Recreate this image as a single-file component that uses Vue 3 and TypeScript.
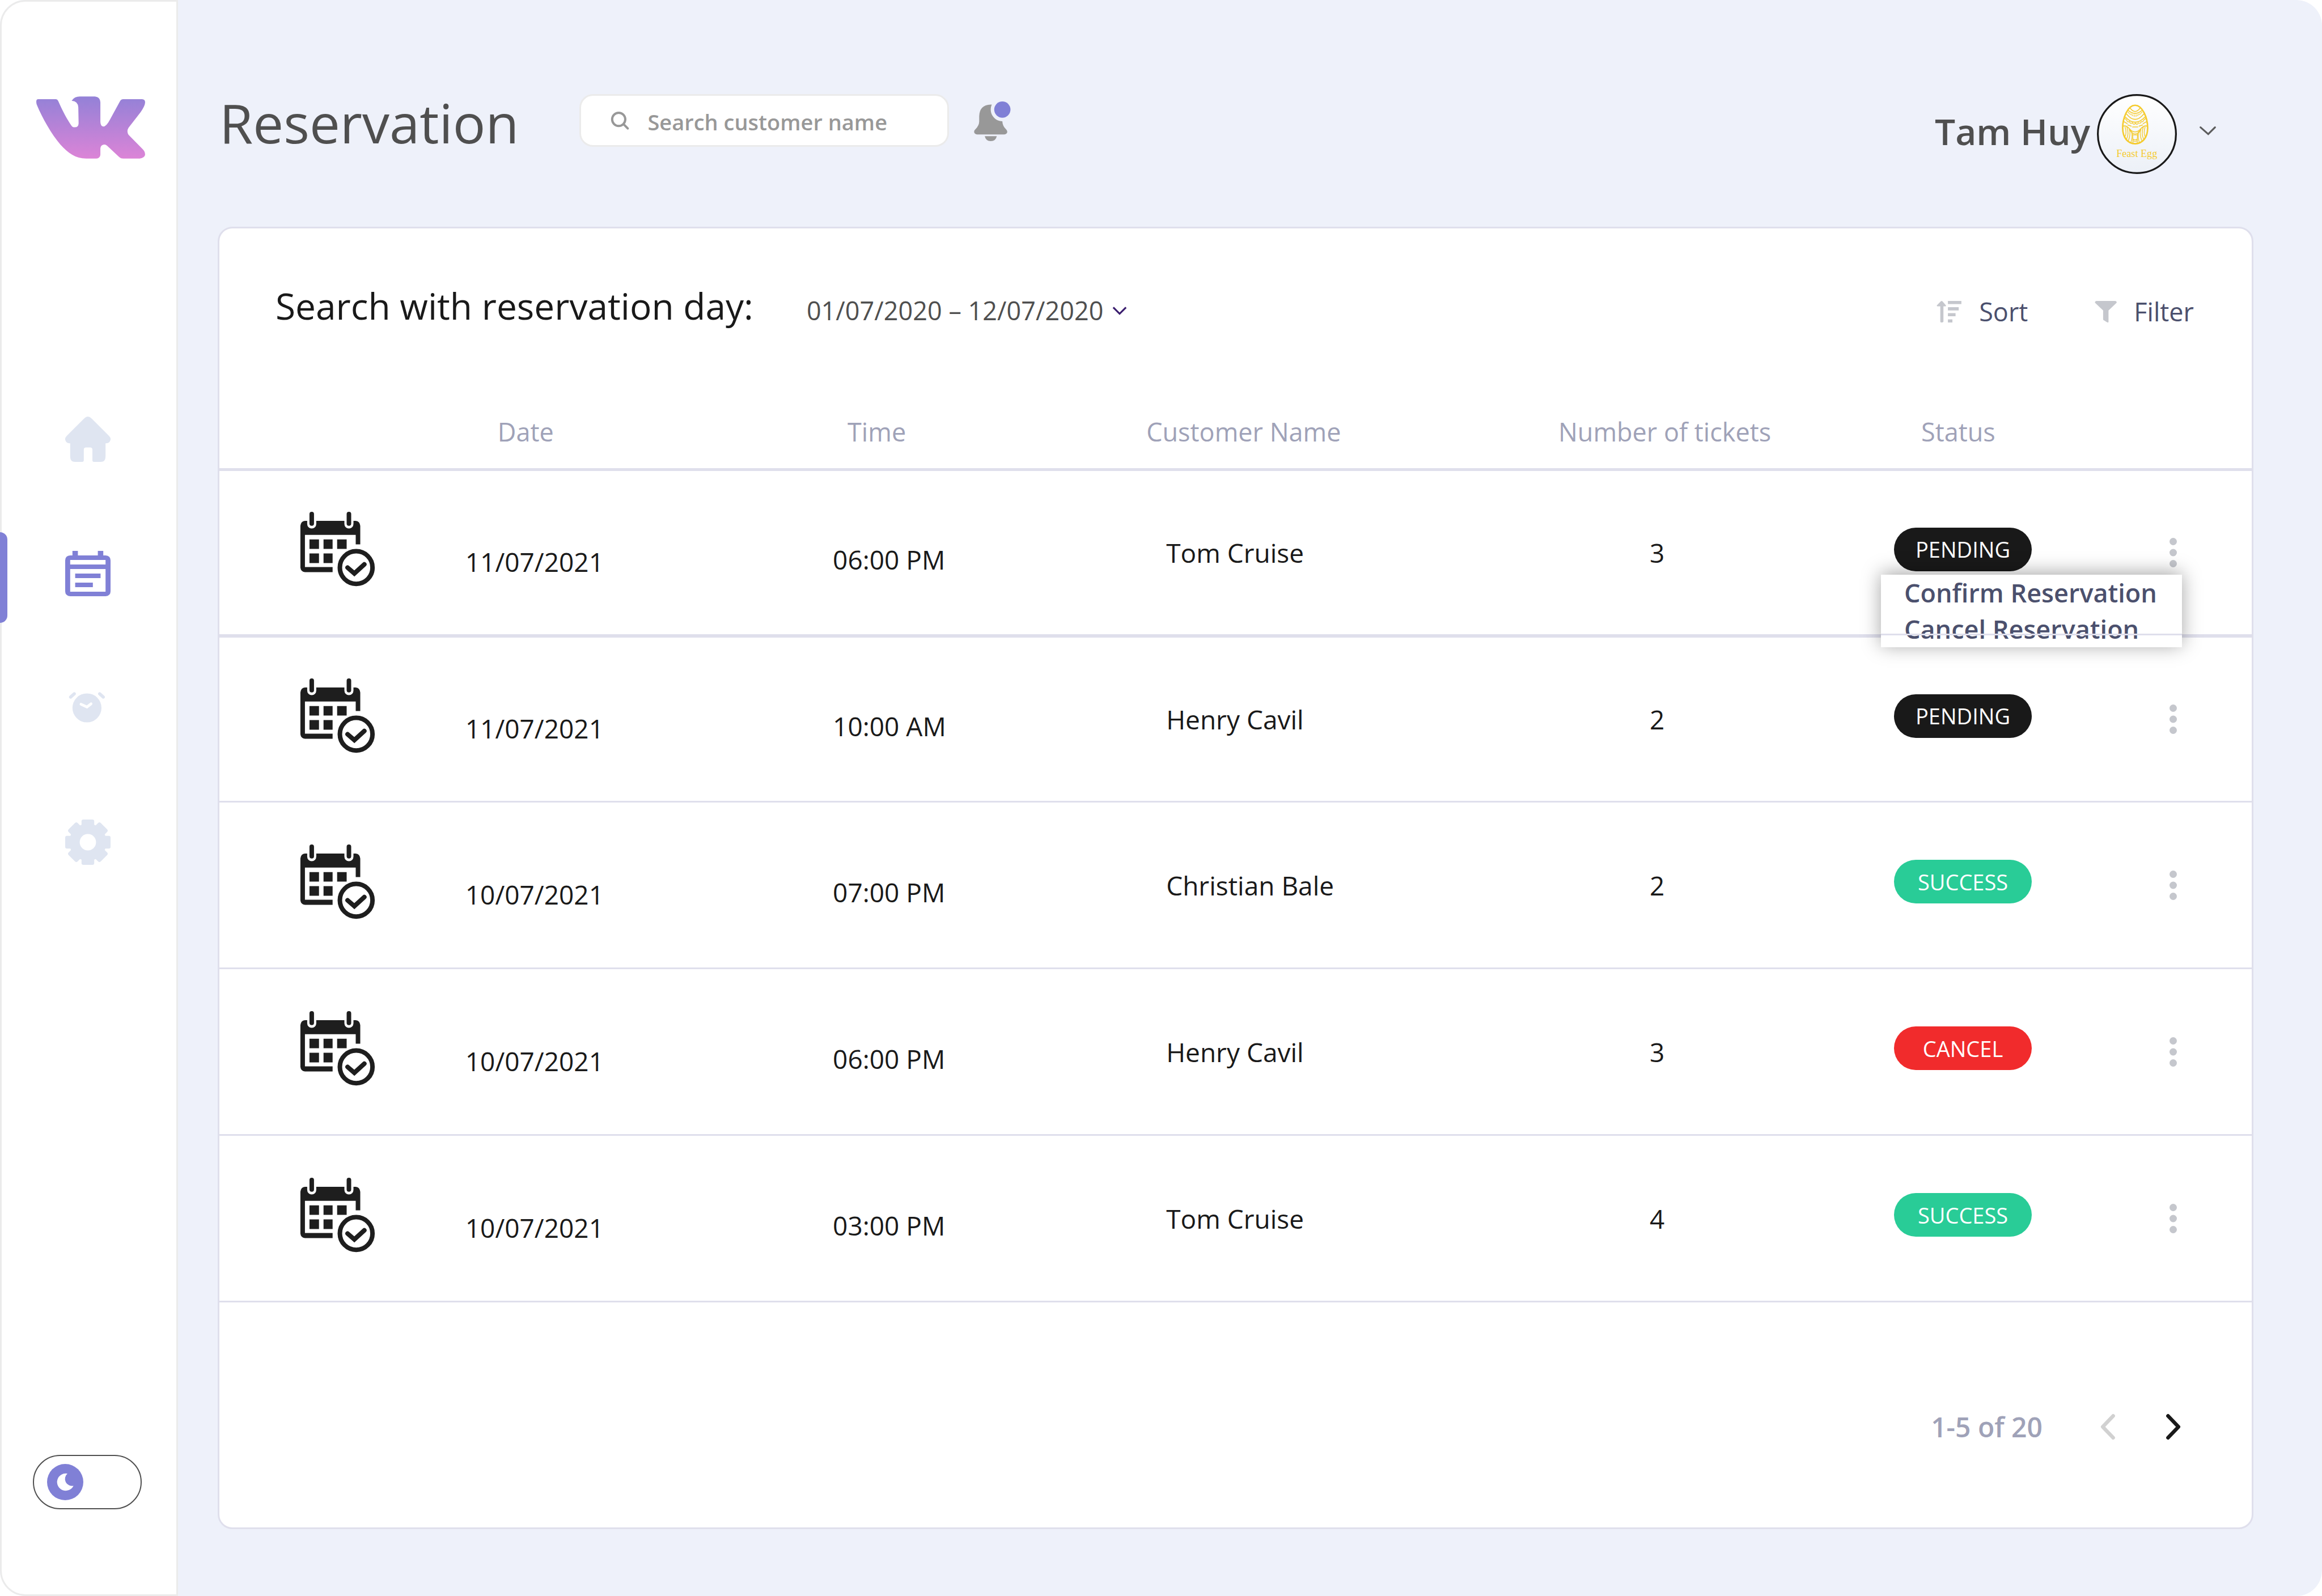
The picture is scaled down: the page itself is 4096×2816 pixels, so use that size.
<script setup lang="ts">
import { ref } from 'vue'

type Status = 'pending' | 'success' | 'cancel'

interface Reservation {
  id: number
  date: string
  time: string
  customer: string
  tickets: number
  status: Status
}

const reservations: Reservation[] = [
  { id: 1, date: '11/07/2021', time: '06:00 PM', customer: 'Tom Cruise', tickets: 3, status: 'pending' },
  { id: 2, date: '11/07/2021', time: '10:00 AM', customer: 'Henry Cavil', tickets: 2, status: 'pending' },
  { id: 3, date: '10/07/2021', time: '07:00 PM', customer: 'Christian Bale', tickets: 2, status: 'success' },
  { id: 4, date: '10/07/2021', time: '06:00 PM', customer: 'Henry Cavil', tickets: 3, status: 'cancel' },
  { id: 5, date: '10/07/2021', time: '03:00 PM', customer: 'Tom Cruise', tickets: 4, status: 'success' },
]

const search = ref('')
const darkMode = ref(false)
const openMenu = ref<number | null>(1)

function toggleMenu(id: number): void {
  openMenu.value = openMenu.value === id ? null : id
}
</script>

<template>
  <div class="app">
    <aside class="sidebar">
      <a class="logo" href="#" aria-label="Home page">
        <svg viewBox="240 336 720 411">
          <defs>
            <linearGradient id="logo-fill" x1="0" y1="0" x2="0" y2="1">
              <stop offset="0" stop-color="#9381d7" />
              <stop offset="1" stop-color="#dc84d7" />
            </linearGradient>
          </defs>
          <path fill="url(#logo-fill)" d="M253 354H368Q381 354 387 370C410 425 445 490 472 528Q480 540 494 540Q519 540 520 514L518 408Q516 367 474 364Q492 336 528 336H628Q663 339 664 374V504Q665 533 683 535Q704 535 728 488L793 369Q800 354 815 354H940Q960 356 960 374Q960 398 930 440L850 543Q836 566 850 589L945 686Q960 702 960 720Q958 743 925 747H815Q799 747 789 737L709 662Q700 654 689 654Q666 656 664 680V722Q661 744 638 747H570C500 747 450 710 400 655C340 585 280 480 243 390Q240 382 240 370Q240 354 253 354Z" />
        </svg>
      </a>

      <nav class="nav">
        <a class="nav-item" href="#" aria-label="Home">
          <svg viewBox="0 0 100 100"><path d="M42 4Q50-4 58 4L97 43Q101 47 100 51Q98 59 90 59H89V88Q89 100 78 100H63Q60 100 60 97V73Q60 68 55 68H46Q41 68 41 73V97Q41 100 38 100H22Q11 100 11 88V59H10Q2 59 0 51Q-1 47 3 43Z" /></svg>
        </a>
        <a class="nav-item active" href="#" aria-label="Reservations" aria-current="page">
          <svg viewBox="0 0 100 100"><path fill-rule="evenodd" d="M16 0H28V10H72V0H84V10H89Q100 11 100 21V89Q100 99 89 100H11Q0 99 0 89V21Q0 11 11 10H16ZM11 20V30H89V20ZM11 40V90H89V40ZM22 50H78V60H22ZM22 70H61V80H22Z" /></svg>
        </a>
        <a class="nav-item" href="#" aria-label="Schedule">
          <svg viewBox="0 0 100 100">
            <circle cx="48" cy="50" r="32" />
            <path d="M12 26L20 19M76 19L84 26" fill="none" stroke="currentColor" stroke-width="7" stroke-linecap="round" />
            <path d="M35 42L48 48L57 41" fill="none" stroke="#fff" stroke-width="6" stroke-linecap="round" />
          </svg>
        </a>
        <a class="nav-item" href="#" aria-label="Settings">
          <svg viewBox="0 0 100 100">
            <circle cx="50" cy="50" r="41" />
            <rect v-for="a in [0, 45, 90, 135]" :key="a" x="36" y="0" width="28" height="100" rx="4" :transform="`rotate(${a} 50 50)`" />
            <circle cx="50" cy="50" r="18" fill="#fff" />
          </svg>
        </a>
      </nav>

      <label class="theme">
        <input v-model="darkMode" type="checkbox" aria-label="Dark mode" />
        <svg class="knob" viewBox="312 384 240 240">
          <circle cx="432" cy="504" r="120" fill="#8080d6" />
          <path fill="#fff" d="M447 448A57 57 0 1 0 487 528A46 46 0 0 1 447 448Z" />
        </svg>
      </label>
    </aside>

    <main class="main">
      <header class="topbar">
        <h1>Reservation</h1>
        <label class="search">
          <svg viewBox="0 0 42 40"><circle cx="19" cy="17" r="14.5" /><path d="M30 28L39 37" /></svg>
          <input v-model="search" type="search" placeholder="Search customer name" aria-label="Search customer name" />
        </label>
        <button class="bell" type="button" aria-label="Notifications">
          <svg viewBox="82 72 243 264">
            <path fill="#989898" d="M192 93H200A78 78 0 0 0 270 204Q271 235 295 258Q303 266 303 274Q301 290 283 292H102Q84 290 82 274Q82 264 91 257Q116 232 116 205V170Q118 96 192 93ZM153 303H233Q226 336 193 336Q160 336 153 303Z" />
            <circle cx="270" cy="126" r="54" fill="#8080d6" />
          </svg>
        </button>
        <button class="user" type="button">
          <span>Tam Huy</span>
          <svg class="avatar" viewBox="192 54 528 528">
            <defs>
              <linearGradient id="avatar-fill" x1="0" y1="0" x2="0" y2="1">
                <stop offset="0" stop-color="#fff" />
                <stop offset="1" stop-color="#ecf0f7" />
              </linearGradient>
            </defs>
            <circle cx="456" cy="318" r="258" fill="url(#avatar-fill)" stroke="#191919" stroke-width="12" />
            <g fill="none" stroke="#f5cb2e" stroke-width="6" stroke-linecap="round">
              <path stroke-width="10" d="M444 128C492 128 527 210 527 278C527 342 492 382 444 382C396 382 362 342 362 278C362 210 396 128 444 128Z" />
              <path d="M412 148Q444 190 476 148M400 163Q444 200 488 163" />
              <path stroke-width="5" d="M398 174L403 180M409 182L413 190M422 186L426 197M437 190L438 202M451 190L450 202M465 186L461 197M478 182L474 190M489 174L484 180" />
              <path d="M388 186Q444 256 501 186M380 206Q444 274 509 206" />
              <path stroke-width="5" d="M376 215Q384 222 388 225Q392 242 407 236Q413 254 426 244Q436 262 446 246Q458 262 466 244Q480 252 484 236Q498 240 501 225Q508 222 513 215" />
              <path d="M370 236L392 249M396 258L418 266M427 271H462M471 266L493 258M497 249L520 236" />
              <path d="M364 266C390 258 402 280 420 296Q444 312 468 296C486 280 500 258 525 266M408 286C416 312 440 318 444 318C448 318 474 312 482 286" />
              <path stroke-width="5" d="M378 272Q392 312 374 340M390 272Q406 316 386 356M406 286C418 320 404 350 398 366M510 272Q496 312 514 340M498 272Q482 316 502 356M482 286C470 320 484 350 490 366M420 300Q430 340 416 374M468 300Q460 340 472 374" />
              <path stroke-width="5" d="M428 318L430 376M460 318L458 376M430 324H458M431 352Q444 360 457 352M431 362Q444 370 457 362" />
            </g>
            <text x="320" y="470" font-size="68" fill="#f5cb2e">Feast Egg</text>
          </svg>
          <svg class="caret" viewBox="0 0 36 20"><path d="M2 2L19 17L34 2" /></svg>
        </button>
      </header>

      <section class="card">
        <div class="toolbar">
          <h2>Search with reservation day:</h2>
          <button class="range" type="button">
            01/07/2020 – 12/07/2020
            <svg viewBox="0 0 32 20"><path d="M2 3L16 17L30 3" /></svg>
          </button>
          <div class="tools">
            <button class="tool" type="button">
              <svg viewBox="0 0 56 48"><path d="M8 12H2Q-1 11 1 9L9 1Q11-1 13 1L20 9Q22 11 19 12H15V46Q14 48 11 48Q8 48 8 46ZM25 0H55V7H25ZM25 14H49V21H25ZM25 27H42V34H25ZM25 41H35V48H25Z" /></svg>
              Sort
            </button>
            <button class="tool" type="button">
              <svg viewBox="0 0 56 48"><path d="M11 0H53Q57 1 56 4L38 21V47Q37 49 34 47L26 42V21L8 4Q7 1 11 0Z" /></svg>
              Filter
            </button>
          </div>
        </div>

        <table class="grid">
          <colgroup>
            <col class="c-icon" /><col class="c-date" /><col class="c-time" /><col class="c-name" />
            <col class="c-count" /><col class="c-status" /><col class="c-menu" />
          </colgroup>
          <thead>
            <tr>
              <th></th>
              <th class="date">Date</th>
              <th class="time">Time</th>
              <th class="name">Customer Name</th>
              <th class="count">Number of tickets</th>
              <th class="status">Status</th>
              <th></th>
            </tr>
          </thead>
          <tbody>
            <tr v-for="r in reservations" :key="r.id">
              <td class="icon">
                <svg viewBox="0 0 166 165">
                  <path fill="#1e1e1e" fill-rule="evenodd" d="M11 20H16V27A10 10 0 0 0 36 27V20H98V27A10 10 0 0 0 118 27V20H123Q132 21 133 31V72H123V51H11V122H72V133H11Q2 132 1 123V31Q2 21 11 20ZM21 61H42V82H21ZM52 61H72V82H52ZM82 61H103V82H82ZM21 92H42V113H21ZM52 92H72V113H52Z" />
                  <g fill="none" stroke="#1e1e1e" stroke-width="10" stroke-linecap="round">
                    <path d="M26 5V26M108 5V26M105 123L120 136L142 116" />
                    <circle cx="124" cy="123" r="36" />
                  </g>
                </svg>
              </td>
              <td class="date">{{ r.date }}</td>
              <td class="time">{{ r.time }}</td>
              <td class="name">{{ r.customer }}</td>
              <td class="count">{{ r.tickets }}</td>
              <td class="status"><span class="pill" :class="r.status">{{ r.status.toUpperCase() }}</span></td>
              <td class="actions">
                <button class="dots" type="button" aria-label="Row actions" @click="toggleMenu(r.id)">
                  <svg viewBox="0 0 16 64"><circle cx="8" cy="8" r="8" /><circle cx="8" cy="32" r="8" /><circle cx="8" cy="56" r="8" /></svg>
                </button>
                <div v-if="openMenu === r.id" class="menu">
                  <button type="button">Confirm Reservation</button>
                  <button type="button">Cancel Reservation</button>
                </div>
              </td>
            </tr>
          </tbody>
        </table>

        <footer class="pager">
          <span>1-5 of 20</span>
          <button type="button" class="prev" aria-label="Previous page" disabled>
            <svg viewBox="0 0 32 56"><path d="M28 4L5 28L28 52" /></svg>
          </button>
          <button type="button" class="next" aria-label="Next page">
            <svg viewBox="0 0 32 56"><path d="M4 4L27 28L4 52" /></svg>
          </button>
        </footer>
      </section>
    </main>
  </div>
</template>

<style>
body {
  margin: 0;
  background: #fff;
}
</style>

<style scoped>
.app,
.app * {
  box-sizing: border-box;
}

.app {
  display: flex;
  min-height: 100vh;
  border-radius: 45px;
  background: #eef1fa;
  color: #191919;
  font-family: "Open Sans", "Noto Sans", sans-serif;
  font-size: 45px;
  line-height: 64px;
}

svg {
  display: block;
  flex: none;
  overflow: visible;
}

button {
  padding: 0;
  border: 0;
  background: none;
  color: inherit;
  font: inherit;
  text-align: left;
}

h1,
h2 {
  margin: 0;
  font-weight: 400;
}

/* Sidebar */
.sidebar {
  display: flex;
  flex: none;
  flex-direction: column;
  width: 314px;
  padding-bottom: 150px;
  border: 3px solid #ebebeb;
  border-radius: 45px 0 0 45px;
  background: #fff;
}

.logo {
  margin: 167px 0 0 61px;
}

.logo svg {
  width: 192px;
  height: 110px;
}

.nav {
  display: flex;
  flex-direction: column;
  margin-top: 376px;
}

.nav-item {
  position: relative;
  display: flex;
  align-items: center;
  height: 237px;
  padding-left: 112px;
  color: #dfe5f1;
}

.nav-item svg {
  width: 80px;
  height: 80px;
  fill: currentColor;
}

.nav-item.active {
  color: #8080d6;
}

.nav-item.active::before {
  content: "";
  position: absolute;
  top: 46px;
  left: -3px;
  width: 13px;
  height: 160px;
  border-radius: 0 13px 13px 0;
  background: #8080d6;
}

.theme {
  position: relative;
  display: flex;
  align-items: center;
  width: 192px;
  height: 96px;
  margin: auto 0 0 55px;
}

.theme input {
  width: 100%;
  height: 100%;
  margin: 0;
  appearance: none;
  border: 2px solid #4f4f4f;
  border-radius: 48px;
}

.knob {
  position: absolute;
  left: 25px;
  width: 64px;
  height: 64px;
}

/* Top bar */
.main {
  display: flex;
  flex: 1;
  flex-direction: column;
  min-width: 0;
  padding: 166px 121px 118px 70px;
}

.topbar {
  display: flex;
  align-items: flex-start;
  height: 234px;
  padding-left: 3px;
  color: #4f4f4f;
}

h1 {
  margin-right: 107px;
  font-size: 96px;
  line-height: 100px;
}

.search {
  display: flex;
  align-items: center;
  gap: 32px;
  width: 652px;
  height: 93px;
  padding-left: 51px;
  border: 3px solid #ebebeb;
  border-radius: 24px;
  background: #fff;
}

.search svg {
  width: 34px;
  height: 32px;
  fill: none;
  stroke: #989898;
  stroke-width: 5;
  stroke-linecap: round;
}

.search input {
  flex: 1;
  min-width: 0;
  padding: 4px 0 0;
  border: 0;
  outline: 0;
  background: none;
  color: #4f4f4f;
  font: 600 38px/52px "Open Sans", "Noto Sans", sans-serif;
}

.search input::placeholder {
  color: #989898;
  opacity: 1;
}

.bell {
  margin: 13px 0 0 44px;
}

.bell svg {
  width: 65px;
  height: 70px;
}

.user {
  display: flex;
  align-items: center;
  margin: 0 66px 0 auto;
  font-size: 64px;
  font-weight: 600;
}

.user span {
  margin-right: 12px;
  padding-bottom: 10px;
}

.avatar {
  width: 141px;
  height: 141px;
  margin-right: 40px;
}

.avatar text {
  font-family: "Liberation Serif", serif;
  font-weight: 400;
}

.caret {
  width: 29px;
  height: 16px;
  margin-bottom: 12px;
  fill: none;
  stroke: #5c5c5c;
  stroke-width: 4;
  stroke-linecap: round;
}

/* Card */
.card {
  display: flex;
  flex: 1;
  flex-direction: column;
  border: 3px solid #dfdfec;
  border-radius: 26px;
  background: #fff;
}

.toolbar {
  display: flex;
  align-items: flex-end;
  padding: 93px 102px 0 99px;
}

h2 {
  font-size: 64px;
  line-height: 88px;
}

.range {
  display: flex;
  align-items: center;
  gap: 16px;
  margin-left: 94px;
  color: #4f4f4f;
  line-height: 72px;
}

.range svg {
  width: 26px;
  height: 16px;
  fill: none;
  stroke: #3a1d6e;
  stroke-width: 4;
}

.tools {
  display: flex;
  gap: 112px;
  margin-left: auto;
}

.tool {
  display: flex;
  align-items: center;
  gap: 30px;
  color: #4b506d;
  line-height: 68px;
}

.tool svg {
  width: 45px;
  height: 38px;
  fill: #c5c7cd;
}

.grid {
  width: 100%;
  border-collapse: separate;
  border-spacing: 0;
  table-layout: fixed;
}

.c-icon { width: 12.1%; }
.c-date { width: 18%; }
.c-time { width: 15.4%; }
.c-name { width: 20.3%; }
.c-count { width: 16.6%; }
.c-status { width: 12.5%; }
.c-menu { width: 5.1%; }

th {
  padding: 147px 0 33px;
  border-bottom: 5px solid #dfdfec;
  color: #9fa2b8;
  font-weight: 400;
  line-height: 62px;
  text-align: left;
  white-space: nowrap;
}

th.date { padding-left: 57px; }
th.time { padding-left: 29px; }
th.name { padding-left: 4px; }
th.count { padding-left: 3px; }
th.status { padding-left: 48px; }

td {
  height: 294px;
  padding: 0;
  border-bottom: 3px solid #dfdfec;
  font-size: 46px;
  vertical-align: middle;
  white-space: nowrap;
}

tr:first-child td {
  border-bottom-width: 6px;
}

tr:nth-child(2) td {
  height: 291px;
}

td.icon { padding: 0 0 12px 142px; }
td.date { padding-top: 32px; }
td.time { padding: 24px 0 0 3px; }
td.name { padding-left: 39px; }
td.count { padding-left: 164px; }
td.status { padding-bottom: 12px; }

.icon svg {
  width: 133px;
  height: 132px;
}

.pill {
  display: flex;
  align-items: center;
  justify-content: center;
  width: 243px;
  height: 77px;
  border-radius: 48px;
  color: #fff;
  font-size: 38px;
}

.pending { background: #191919; }
.success { background: #29cc97; }
.cancel { background: #f12b2c; }

.actions {
  position: relative;
}

.dots {
  display: block;
  margin-left: 38px;
}

.dots svg {
  width: 13px;
  height: 52px;
  fill: #c5c7cd;
}

.menu {
  position: absolute;
  top: 183px;
  right: 123px;
  z-index: 1;
  display: flex;
  flex-direction: column;
  width: 531px;
  padding-left: 41px;
  background: #fff;
  box-shadow: 0 -3px 32px rgba(0, 0, 0, 0.36);
  color: #4b506d;
  font-size: 45px;
  font-weight: 600;
}

/* The row divider runs across the open menu */
.menu::after {
  content: "";
  position: absolute;
  top: 104px;
  right: 0;
  left: 0;
  height: 3px;
  background: #dfdfec;
}

/* Pager */
.pager {
  display: flex;
  flex: 1;
  align-items: center;
  justify-content: flex-end;
  padding: 42px 125px 0 0;
  color: #9fa2b8;
  font-size: 48px;
  font-weight: 600;
}

.pager svg {
  width: 26px;
  height: 45px;
  fill: none;
  stroke: currentColor;
  stroke-width: 8;
  stroke-linecap: round;
  stroke-linejoin: round;
}

.prev {
  margin: 0 90px 0 102px;
  color: #d1d1d1;
}

.next {
  color: #191919;
}
</style>
